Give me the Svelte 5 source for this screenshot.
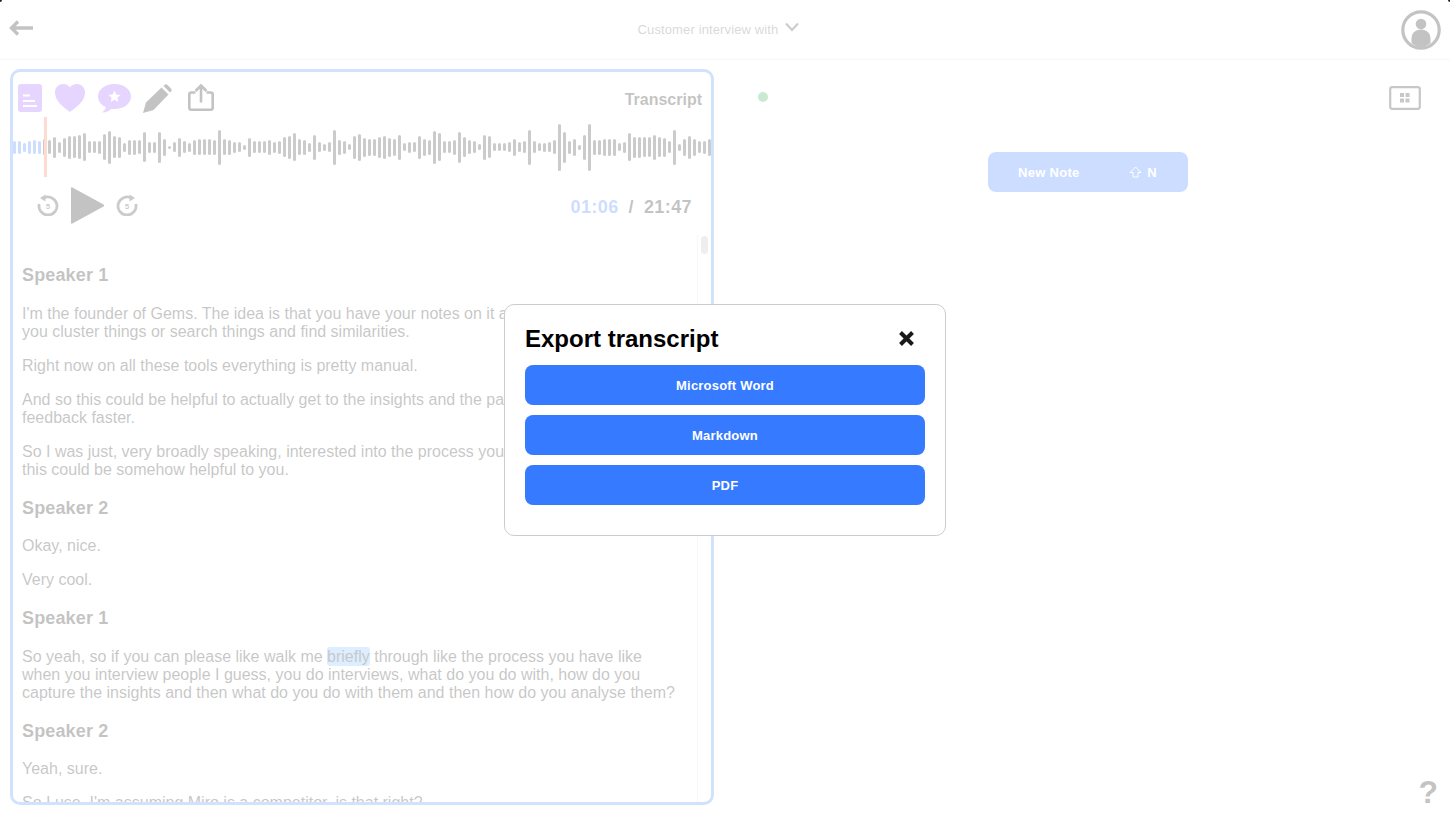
<script>
  // bar heights of the waveform, in px
  const bars = [
    13,13,9,13,14,13,16,14,21,11,19,23,22,24,28,12,12,13,26,33,22,21,9,15,15,14,30,11,11,31,17,3,10,19,12,9,15,16,16,16,15,35,16,15,11,10,5,
    19,12,12,12,15,11,13,20,23,28,16,15,9,25,10,7,10,35,15,13,6,23,27,19,17,17,21,23,19,17,25,8,11,10,23,17,15,33,28,12,12,15,31,20,14,12,6,
    25,22,8,8,8,10,17,10,12,35,12,8,9,10,14,47,31,13,17,5,25,47,15,15,17,17,17,8,11,28,21,21,20,20,25,20,19,12,35,7,17,23,17,12,13,17
  ];
  const played = 6;

  const formats = ["Microsoft Word", "Markdown", "PDF"];
</script>

<div class="page">
  <header>
    <svg class="back" width="24" height="16" viewBox="0 0 24 16">
      <path d="M9 1.5 L2.5 8 L9 14.5 M2.5 8 H24" fill="none" stroke="#111" stroke-width="3.4" />
    </svg>
    <div class="title">
      <span>Customer interview with</span>
      <svg width="14" height="10" viewBox="0 0 14 10">
        <path d="M1 1.5 L7 8 L13 1.5" fill="none" stroke="#333" stroke-width="2" />
      </svg>
    </div>
    <svg class="avatar" width="40" height="40" viewBox="0 0 40 40">
      <circle cx="20" cy="20" r="18.2" fill="none" stroke="#111" stroke-width="3.2" />
      <circle cx="20" cy="14" r="5.3" fill="#111" />
      <path d="M10.5 33 V29 C10.5 23 14.5 19.5 20 19.5 C25.5 19.5 29.5 23 29.5 29 V33 C24 38.5 16 38.5 10.5 33 Z" fill="#111" />
    </svg>
  </header>

  <main>
    <section class="panel">
      <div class="toolbar">
        <svg width="24" height="28" viewBox="0 0 24 28">
          <rect width="24" height="28" rx="3" fill="#9b57ff" />
          <path d="M5 11.5 H12 M5 17 H17 M5 22 H19" stroke="#fff" stroke-width="2" />
        </svg>
        <svg width="30" height="28" viewBox="0 0 30 28">
          <path d="M15 28 C8 23 0 17 0 8.5 C0 3 4 0 8.5 0 C11 0 13.5 1.2 15 3.5 C16.5 1.2 19 0 21.5 0 C26 0 30 3 30 8.5 C30 17 22 23 15 28 Z" fill="#9b57ff" />
        </svg>
        <svg width="33" height="29" viewBox="0 0 33 29">
          <path d="M16.5 0 C26 0 33 5.5 33 12.5 C33 19.5 26 25 16.5 25 C15.5 25 14.5 25 13.5 24.8 C11.5 27 8.5 28.5 4 28.5 C6 27 7.5 25 7.8 23 C3 21 0 17 0 12.5 C0 5.5 7 0 16.5 0 Z" fill="#9b57ff" />
          <path d="M16.5 6.5 L18.3 10.4 L22.5 10.9 L19.4 13.7 L20.2 18 L16.5 15.8 L12.8 18 L13.6 13.7 L10.5 10.9 L14.7 10.4 Z" fill="#fff" />
        </svg>
        <svg class="pencil" width="29" height="29" viewBox="0 0 29 29">
          <path d="M0 29 L3 18.5 L18.5 3.5 L25.5 10.5 L10.5 26 Z" fill="#111" />
          <path d="M20.5 2 L21.5 1 Q23 -0.3 24.5 1 L28 4.5 Q29.3 6 28 7.5 L27 8.5 Z" fill="#111" />
        </svg>
        <svg width="30" height="28" viewBox="-3 0 30 28">
          <path d="M7.5 8.5 H3.5 Q1.3 8.5 1.3 10.5 V23.5 Q1.3 25.7 3.5 25.7 H22.5 Q24.7 25.7 24.7 23.5 V10.5 Q24.7 8.5 22.5 8.5 H18.5" fill="none" stroke="#111" stroke-width="2.6" />
          <path d="M13 18.5 V2 M7.5 7 L13 1.5 L18.5 7" fill="none" stroke="#111" stroke-width="2.6" />
        </svg>
        <span class="label">Transcript</span>
      </div>

      <div class="wave">
        {#each bars as h, i}
          <i class:played={i < played} style="height: {h}px"></i>
        {/each}
        <b class="playhead"></b>
      </div>

      <div class="controls">
        <svg width="22" height="22" viewBox="0 0 22 22">
          <path d="M6.5 4.2 A9 9 0 1 1 2.2 10" fill="none" stroke="#333" stroke-width="2.8" />
          <path d="M8.5 0.5 V7.5 L3 4 Z" fill="#333" />
          <text x="11" y="15" text-anchor="middle">5</text>
        </svg>
        <svg class="play" width="35" height="39" viewBox="0 0 36 40" preserveAspectRatio="none">
          <path d="M2.5 1.5 L34.5 19 Q36 20 34.5 21 L2.5 38.5 Q1 39.2 1 37.5 V2.5 Q1 0.8 2.5 1.5 Z" fill="#111" />
        </svg>
        <svg width="22" height="22" viewBox="0 0 22 22">
          <path d="M15.5 4.2 A9 9 0 1 0 19.8 10" fill="none" stroke="#333" stroke-width="2.8" />
          <path d="M13.5 0.5 V7.5 L19 4 Z" fill="#333" />
          <text x="11" y="15" text-anchor="middle">5</text>
        </svg>
        <div class="time">
          <span class="now">01:06</span>
          <span class="sep">/</span>
          <span>21:47</span>
        </div>
      </div>

      <div class="transcript">
        <div class="text">
          <h3>Speaker 1</h3>
          <p>I'm the founder of Gems. The idea is that you have your notes on it and then, when<br />you cluster things or search things and find similarities.</p>
          <p>Right now on all these tools everything is pretty manual.</p>
          <p>And so this could be helpful to actually get to the insights and the patterns in your<br />feedback faster.</p>
          <p>So I was just, very broadly speaking, interested into the process you have and how<br />this could be somehow helpful to you.</p>
          <h3>Speaker 2</h3>
          <p>Okay, nice.</p>
          <p>Very cool.</p>
          <h3>Speaker 1</h3>
          <p>So yeah, so if you can please like walk me <mark>briefly</mark> through like the process you have like when you interview people I guess, you do interviews, what do you do with, how do you capture the insights and then what do you do with them and then how do you analyse them?</p>
          <h3>Speaker 2</h3>
          <p>Yeah, sure.</p>
          <p>So I use, I'm assuming Miro is a competitor, is that right?</p>
        </div>
        <div class="gutter"><div class="thumb"></div></div>
      </div>
    </section>

    <section class="notes">
      <div class="notes-top">
        <span class="dot"></span>
        <svg width="32" height="24" viewBox="0 0 32 24">
          <rect x="1.2" y="1.2" width="29.6" height="21.6" rx="2" fill="none" stroke="#222" stroke-width="2.2" />
          <path d="M11 7 h4 v4 h-4 z M16.5 7 h4 v4 h-4 z M11 12.5 h4 v4 h-4 z M16.5 12.5 h4 v4 h-4 z" fill="#222" />
        </svg>
      </div>
      <button class="new-note">
        <span>New Note</span>
        <span class="shortcut">
          <svg width="13" height="12" viewBox="0 0 13 12">
            <path d="M6.5 1 L12 6.5 H9 V11 H4 V6.5 H1 Z" fill="none" stroke="#fff" stroke-width="1" />
          </svg>
          N
        </span>
      </button>
      <span class="help">?</span>
    </section>
  </main>

  <div class="overlay">
    <div class="modal">
      <div class="modal-head">
        <h2>Export transcript</h2>
        <svg width="17" height="17" viewBox="0 0 17 17">
          <path d="M2.5 2.5 L14.5 14.5 M14.5 2.5 L2.5 14.5" stroke="#1a1a1a" stroke-width="4" />
        </svg>
      </div>
      {#each formats as name}
        <button class="export">{name}</button>
      {/each}
    </div>
  </div>

  <span class="corner left"></span>
  <span class="corner right"></span>
</div>

<style>
  :global(body) {
    margin: 0;
    background: #fff;
    font-family: "Liberation Sans", Arial, sans-serif;
  }

  .page {
    height: 100vh;
    display: flex;
    flex-direction: column;
    overflow: hidden;
  }

  header {
    height: 59px;
    flex: none;
    display: flex;
    align-items: center;
    justify-content: space-between;
    padding: 0 9px 0 9px;
    border-bottom: 1px solid #ddd;
  }

  .back {
    margin-top: -4px;
  }

  .title {
    display: flex;
    align-items: center;
    gap: 7px;
    margin-left: 3px;
    font-size: 13px;
    letter-spacing: 0.13px;
    color: #666;
  }

  .title svg {
    margin-top: -5px;
  }

  main {
    flex: 1;
    min-height: 0;
    display: flex;
    padding: 9px 0 0 10px;
  }

  .panel {
    width: 704px;
    box-sizing: border-box;
    flex: none;
    margin-bottom: 10px;
    display: flex;
    flex-direction: column;
    border: 3px solid #4a8aff;
    border-radius: 10px;
    overflow: hidden;
  }

  .toolbar {
    display: flex;
    align-items: center;
    gap: 13px;
    height: 28px;
    margin-top: 12px;
    padding: 0 9px 0 5px;
  }

  .pencil {
    margin-left: -1px;
  }

  .label {
    margin-left: auto;
    margin-top: 4px;
    font-size: 16px;
    font-weight: bold;
    color: #111;
  }

  .wave {
    position: relative;
    height: 60px;
    margin-top: 5px;
    display: flex;
    align-items: center;
    gap: 2px;
    flex: none;
  }

  .wave i {
    width: 3px;
    flex: none;
    border-radius: 1.5px;
    background: #333;
  }

  .wave i.played {
    background: #3478ff;
  }

  .playhead {
    position: absolute;
    left: 31px;
    top: 0;
    width: 3px;
    height: 60px;
    background: #f87050;
  }

  .controls {
    height: 56px;
    padding: 0 19px 2px 24px;
    flex: none;
    display: flex;
    align-items: center;
    gap: 11px;
  }

  .controls text {
    font-size: 8px;
    font-weight: bold;
    fill: #333;
  }

  .time {
    margin-left: auto;
    margin-top: 4px;
    display: flex;
    gap: 10px;
    font-size: 18px;
    font-weight: bold;
    letter-spacing: 0.4px;
    color: #111;
  }

  .now {
    color: #3478ff;
  }

  .transcript {
    flex: 1;
    min-height: 0;
    display: flex;
  }

  .text {
    flex: 1;
    min-width: 0;
    overflow: hidden;
    padding: 11.3px 17px 0 9px;
    font-size: 16px;
    line-height: 18px;
    color: #222;
  }

  .text h3 {
    margin: 19px 0 18.5px;
    font-size: 18px;
    line-height: 21px;
    letter-spacing: 0.15px;
    color: #111;
  }

  .text p {
    margin: 0 0 16px;
  }

  mark {
    color: inherit;
    background: #75baff;
    border-radius: 3px;
    padding: 1px 0;
  }

  .gutter {
    width: 14px;
    flex: none;
    box-sizing: border-box;
    border-left: 1px solid #ddd;
    padding: 1px 0 0 3px;
  }

  .thumb {
    width: 7px;
    height: 18px;
    border-radius: 4px;
    background: #bbb;
  }

  .notes {
    flex: 1;
    min-width: 0;
    display: flex;
    flex-direction: column;
    padding: 17px 29px 7px 44px;
  }

  .notes-top {
    display: flex;
    align-items: center;
    justify-content: space-between;
    height: 24px;
  }

  .dot {
    width: 10px;
    height: 10px;
    margin-top: -2px;
    border-radius: 50%;
    background: #2fa84a;
  }

  .new-note {
    width: 200px;
    height: 40px;
    margin: 42px 0 0 230px;
    padding: 0 31px 0 30px;
    border: 0;
    border-radius: 8px;
    background: #3478ff;
    color: #fff;
    font: bold 13px "Liberation Sans", Arial, sans-serif;
    letter-spacing: 0.3px;
    display: flex;
    align-items: center;
    justify-content: space-between;
  }

  .shortcut {
    display: flex;
    align-items: center;
    gap: 5px;
  }

  .help {
    margin: auto -17px 0 0;
    align-self: flex-end;
    font-size: 32px;
    line-height: 32px;
    font-weight: bold;
    color: #111;
  }

  .overlay {
    position: fixed;
    inset: 0;
    background: rgba(255, 255, 255, 0.75);
    display: flex;
    justify-content: center;
    align-items: flex-start;
    padding-top: 304px;
  }

  .modal {
    width: 442px;
    height: 232px;
    box-sizing: border-box;
    padding: 15px 20px 0;
    background: #fff;
    border: 1px solid #ccc;
    border-radius: 10px;
    display: flex;
    flex-direction: column;
    gap: 10px;
  }

  .modal-head {
    display: flex;
    align-items: center;
    justify-content: space-between;
    height: 36px;
    margin-bottom: -1px;
    padding-right: 10px;
  }

  .modal-head h2 {
    margin: 2px 0 0;
    font-size: 24px;
    color: #000;
  }

  .export {
    height: 40px;
    flex: none;
    border: 0;
    border-radius: 8px;
    background: #367aff;
    color: #fff;
    font: bold 13px "Liberation Sans", Arial, sans-serif;
    letter-spacing: 0.2px;
  }

  .corner {
    position: fixed;
    top: 0;
    width: 2px;
    height: 2px;
    background: #222;
  }

  .corner.left {
    left: 0;
    border-bottom-right-radius: 2px;
  }

  .corner.right {
    right: 0;
    border-bottom-left-radius: 2px;
  }
</style>
